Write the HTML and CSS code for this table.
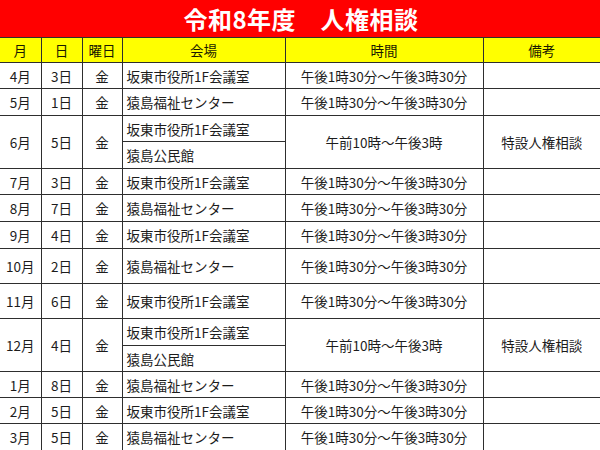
FILE: index.html
```html
<!DOCTYPE html>
<html lang="ja">
<head>
<meta charset="utf-8">
<link rel="stylesheet" href="styles.css">
</head>
<body>
<div class="title">令和8年度　人権相談</div>
<table class="schedule">
  <colgroup>
    <col class="c-m"><col class="c-d"><col class="c-w"><col class="c-v"><col class="c-t"><col class="c-n">
  </colgroup>
  <thead>
    <tr class="h-head"><th>月</th><th>日</th><th>曜日</th><th>会場</th><th>時間</th><th>備考</th></tr>
  </thead>
  <tbody>
    <tr class="h26"><td>4月</td><td>3日</td><td>金</td><td class="venue">坂東市役所1F会議室</td><td>午後1時30分～午後3時30分</td><td></td></tr>
    <tr class="h27"><td>5月</td><td>1日</td><td>金</td><td class="venue">猿島福祉センター</td><td>午後1時30分～午後3時30分</td><td></td></tr>
    <tr class="h26"><td rowspan="2">6月</td><td rowspan="2">5日</td><td rowspan="2">金</td><td class="venue">坂東市役所1F会議室</td><td rowspan="2">午前10時～午後3時</td><td rowspan="2">特設人権相談</td></tr>
    <tr class="h27"><td class="venue">猿島公民館</td></tr>
    <tr class="h26"><td>7月</td><td>3日</td><td>金</td><td class="venue">坂東市役所1F会議室</td><td>午後1時30分～午後3時30分</td><td></td></tr>
    <tr class="h27"><td>8月</td><td>7日</td><td>金</td><td class="venue">猿島福祉センター</td><td>午後1時30分～午後3時30分</td><td></td></tr>
    <tr class="h27"><td>9月</td><td>4日</td><td>金</td><td class="venue">坂東市役所1F会議室</td><td>午後1時30分～午後3時30分</td><td></td></tr>
    <tr class="h35"><td>10月</td><td>2日</td><td>金</td><td class="venue">猿島福祉センター</td><td>午後1時30分～午後3時30分</td><td></td></tr>
    <tr class="h35"><td>11月</td><td>6日</td><td>金</td><td class="venue">坂東市役所1F会議室</td><td>午後1時30分～午後3時30分</td><td></td></tr>
    <tr class="h27"><td rowspan="2">12月</td><td rowspan="2">4日</td><td rowspan="2">金</td><td class="venue">坂東市役所1F会議室</td><td rowspan="2">午前10時～午後3時</td><td rowspan="2">特設人権相談</td></tr>
    <tr class="h26"><td class="venue">猿島公民館</td></tr>
    <tr class="h26"><td>1月</td><td>8日</td><td>金</td><td class="venue">猿島福祉センター</td><td>午後1時30分～午後3時30分</td><td></td></tr>
    <tr class="h26"><td>2月</td><td>5日</td><td>金</td><td class="venue">坂東市役所1F会議室</td><td>午後1時30分～午後3時30分</td><td></td></tr>
    <tr class="h27"><td>3月</td><td>5日</td><td>金</td><td class="venue">猿島福祉センター</td><td>午後1時30分～午後3時30分</td><td></td></tr>
  </tbody>
</table>
</body>
</html>
```

FILE: styles.css
```css
html, body {
  margin: 0;
  padding: 0;
  background: #ffffff;
}
body {
  width: 600px;
  height: 450px;
  overflow: hidden;
  font-family: "Noto Sans CJK JP", "Noto Sans", sans-serif;
  color: #1c1c1c;
}
.title {
  height: 37px;
  background: #ff0000;
  color: #ffffff;
  font-weight: 700;
  font-size: 24px;
  line-height: 37px;
  text-align: center;
  letter-spacing: 0.5px;
  padding-left: 2px;
}
.schedule {
  width: 600px;
  border-collapse: collapse;
  table-layout: fixed;
  font-size: 13.5px;
}
.c-m { width: 41px; }
.c-d { width: 41px; }
.c-w { width: 40px; }
.c-v { width: 163px; }
.c-t { width: 198px; }
.c-n { width: 117px; }
.schedule th,
.schedule td {
  border: 1px solid #2e2e2e;
  padding: 0;
  text-align: center;
  vertical-align: middle;
  font-weight: 400;
  white-space: nowrap;
  line-height: 16px;
}
.schedule tr > :first-child { border-left: none; }
.schedule tr > :last-child { border-right: none; }
.schedule th {
  background: #ffff00;
  color: #1a1a00;
}
.schedule td.venue {
  text-align: left;
  padding-left: 4px;
}
.schedule tr > td.venue:last-child { border-right: 1px solid #2e2e2e; }
.h-head { height: 25px; }
.h26 { height: 26px; }
.h27 { height: 27px; }
.h35 { height: 35px; }
```
